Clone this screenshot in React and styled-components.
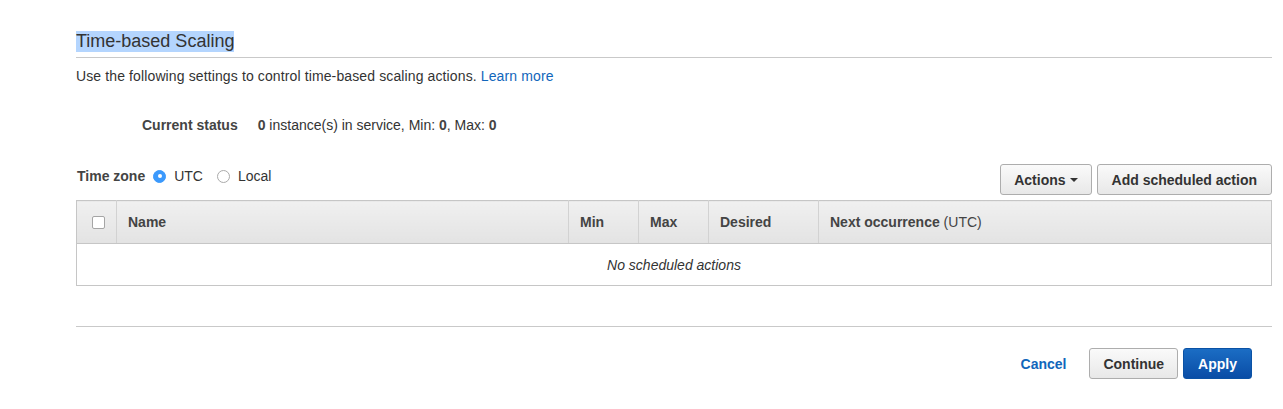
import React from "react";
import styled, { createGlobalStyle } from "styled-components";

const GlobalStyle = createGlobalStyle`
  body {
    margin: 0;
    background: #fff;
    font-family: "Liberation Sans", Arial, sans-serif;
    font-size: 14px;
    color: #444;
  }
`;

const Page = styled.div`
  width: 1196px;
  padding: 31px 0 0 76px;
`;

const Header = styled.div`
  border-bottom: 1px solid #c9c9c9;
  padding-bottom: 5px;
`;

const Title = styled.h2`
  margin: 0;
  display: inline-block;
  font-size: 18px;
  font-weight: normal;
  line-height: 21px;
  color: #333;
  background: #b4d5fe;
`;

const Description = styled.p`
  margin: 10px 0 0;
  line-height: 17px;
  letter-spacing: 0.12px;
  color: #333;
`;

const Link = styled.a`
  color: #1166bb;
  text-decoration: none;
  font-weight: ${(p) => (p.bold ? "bold" : "normal")};
  cursor: pointer;
`;

const StatusRow = styled.div`
  display: flex;
  gap: 20px;
  margin: 32px 0 0 66px;
  line-height: 17px;
  color: #333;
`;

const Label = styled.span`
  font-weight: bold;
  color: #444;
`;

const Toolbar = styled.div`
  display: flex;
  align-items: flex-end;
  justify-content: space-between;
  margin-top: 30px;
`;

const TimeZone = styled.div`
  display: flex;
  align-items: center;
  gap: 8px;
  padding: 0 0 11px 1px;
  color: #333;
`;

const RadioOption = styled.label`
  display: flex;
  align-items: center;
  gap: 8px;
  margin-right: 6px;
`;

const Radio = styled.span`
  width: 13px;
  height: 13px;
  border-radius: 50%;
  box-sizing: border-box;
  background: ${(p) => (p.checked ? "#3b99fc" : "#fff")};
  border: 1px solid ${(p) => (p.checked ? "#3b99fc" : "#aaa")};
  display: flex;
  align-items: center;
  justify-content: center;
  &::after {
    content: "";
    width: 4px;
    height: 4px;
    border-radius: 50%;
    background: #fff;
    display: ${(p) => (p.checked ? "block" : "none")};
  }
`;

const ButtonGroup = styled.div`
  display: flex;
  gap: 5px;
  align-items: center;
`;

const Button = styled.button`
  font-family: inherit;
  font-size: 14px;
  font-weight: bold;
  height: 31px;
  padding: 0 ${(p) => p.pad || 14}px;
  border-radius: 3px;
  cursor: pointer;
  display: flex;
  align-items: center;
  gap: 4px;
  color: ${(p) => (p.primary ? "#fff" : "#333")};
  border: 1px solid ${(p) => (p.primary ? "#0b52a5" : "#adadad")};
  background: ${(p) =>
    p.primary
      ? "linear-gradient(#1b6dc4, #0a4da6)"
      : "linear-gradient(#fafafa, #e8e8e8)"};
`;

const Caret = styled.span`
  width: 0;
  height: 0;
  border-left: 4px solid transparent;
  border-right: 4px solid transparent;
  border-top: 4px solid #333;
  margin-top: 1px;
`;

const Table = styled.table`
  width: 1196px;
  margin-top: 5px;
  table-layout: fixed;
  border-collapse: collapse;
  border: 1px solid #c6c6c6;
`;

const Th = styled.th`
  height: 42px;
  padding: 0 11px;
  text-align: left;
  font-size: 14px;
  font-weight: bold;
  color: #444;
  background: linear-gradient(#f0f0f0, #e3e3e3);
  border-bottom: 1px solid #c6c6c6;
  & + & {
    border-left: 1px solid #d2d2d2;
  }
`;

const Light = styled.span`
  font-weight: normal;
`;

const Checkbox = styled.span`
  display: block;
  width: 11px;
  height: 11px;
  margin-left: 4px;
  border: 1px solid #a5a5a5;
  border-radius: 2px;
  background: #fff;
`;

const EmptyCell = styled.td`
  height: 41px;
  padding: 0;
  text-align: center;
  font-style: italic;
  font-size: 14px;
  color: #333;
`;

const Footer = styled.div`
  margin-top: 40px;
  border-top: 1px solid #c9c9c9;
  padding: 21px 20px 0 0;
  display: flex;
  justify-content: flex-end;
  align-items: center;
  gap: 5px;
`;

const CancelLink = styled(Link)`
  font-size: 14px;
  margin-right: 18px;
`;

const columns = [40, 452, 70, 70, 110, null];

export default function App() {
  return (
    <>
      <GlobalStyle />
      <Page>
        <Header>
          <Title>Time-based Scaling</Title>
        </Header>
        <Description>
          Use the following settings to control time-based scaling actions.{" "}
          <Link>Learn more</Link>
        </Description>
        <StatusRow>
          <Label>Current status</Label>
          <span>
            <Label>0</Label> instance(s) in service, Min: <Label>0</Label>, Max:{" "}
            <Label>0</Label>
          </span>
        </StatusRow>
        <Toolbar>
          <TimeZone>
            <Label>Time zone</Label>
            <RadioOption>
              <Radio checked />
              UTC
            </RadioOption>
            <RadioOption>
              <Radio />
              Local
            </RadioOption>
          </TimeZone>
          <ButtonGroup>
            <Button pad={13}>
              Actions <Caret />
            </Button>
            <Button>Add scheduled action</Button>
          </ButtonGroup>
        </Toolbar>
        <Table>
          <colgroup>
            {columns.map((w, i) => (
              <col key={i} style={w ? { width: w } : undefined} />
            ))}
          </colgroup>
          <thead>
            <tr>
              <Th>
                <Checkbox />
              </Th>
              <Th>Name</Th>
              <Th>Min</Th>
              <Th>Max</Th>
              <Th>Desired</Th>
              <Th>
                Next occurrence <Light>(UTC)</Light>
              </Th>
            </tr>
          </thead>
          <tbody>
            <tr>
              <EmptyCell colSpan={6}>No scheduled actions</EmptyCell>
            </tr>
          </tbody>
        </Table>
        <Footer>
          <CancelLink bold>Cancel</CancelLink>
          <Button pad={13}>Continue</Button>
          <Button primary pad={14}>Apply</Button>
        </Footer>
      </Page>
    </>
  );
}
